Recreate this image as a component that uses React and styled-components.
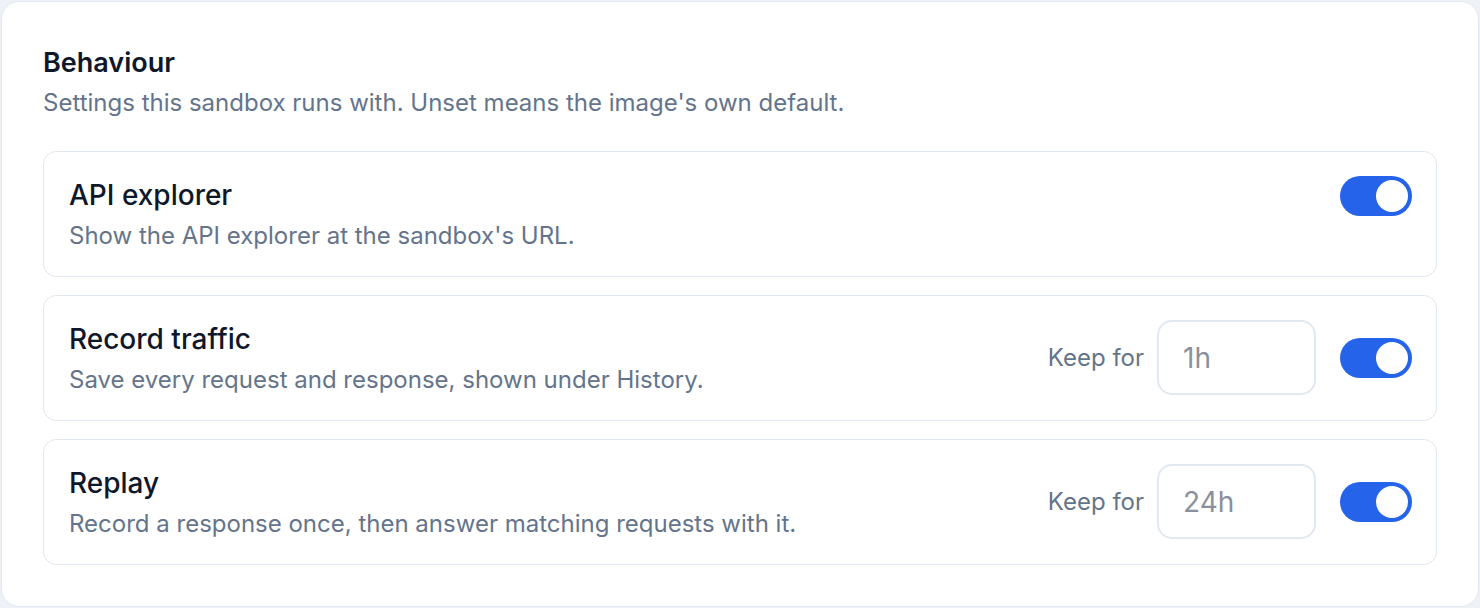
import React, { useState } from "react";
import styled, { createGlobalStyle } from "styled-components";

const Global = createGlobalStyle`
  html, body { margin: 0; padding: 0; background: #eef2f7; }
  body { font-family: Inter, "Noto Sans", sans-serif; -webkit-font-smoothing: antialiased; }
  * { box-sizing: border-box; }
`;

const Page = styled.div`
  padding: 1px;
`;

const Panel = styled.section`
  background: #ffffff;
  border: 1px solid #e2e8f0;
  border-radius: 18px;
  padding: 43px 41px 41px 41px;
  height: 606px;
  display: flex;
  flex-direction: column;
`;

const Header = styled.header`
  display: flex;
  flex-direction: column;
  gap: 6px;
  margin-bottom: 32px;
`;

const Title = styled.h2`
  margin: 0;
  font-size: 27px;
  line-height: 36px;
  font-weight: 600;
  color: #0f172a;
`;

const Subtitle = styled.p`
  margin: 0;
  font-size: 24px;
  line-height: 32px;
  color: #64748b;
`;

const List = styled.div`
  display: flex;
  flex-direction: column;
  gap: 18px;
`;

const Row = styled.div`
  border: 1px solid #e2e8f0;
  border-radius: 13px;
  padding: 24px 24px 24px 25px;
  display: flex;
  align-items: flex-start;
  gap: 24px;
`;

const Info = styled.div`
  flex: 1;
  display: flex;
  flex-direction: column;
  gap: 6px;
`;

const RowTitle = styled.div`
  font-size: 28px;
  line-height: 38px;
  font-weight: 500;
  color: #0f172a;
`;

const RowDesc = styled.div`
  font-size: 24px;
  line-height: 32px;
  color: #64748b;
`;

const Controls = styled.div`
  display: flex;
  align-items: center;
  gap: 24px;
`;

const Keep = styled.label`
  display: flex;
  align-items: center;
  gap: 13px;
  font-size: 24px;
  color: #64748b;
`;

const Input = styled.input`
  width: 159px;
  height: 75px;
  border: 2px solid #e2e8f0;
  border-radius: 15px;
  padding: 0 24px;
  font-family: Inter, "Noto Sans", sans-serif;
  font-size: 28px;
  color: #0f172a;
  outline: none;
  background: #fff;
  &::placeholder { color: #8a909b; }
`;

const Switch = styled.button`
  width: 72px;
  height: 40px;
  border: none;
  border-radius: 20px;
  padding: 0;
  background: ${(p) => (p.$on ? "#2563eb" : "#cbd5e1")};
  position: relative;
  cursor: pointer;
  flex-shrink: 0;
  &::after {
    content: "";
    position: absolute;
    top: 4px;
    left: ${(p) => (p.$on ? "36px" : "4px")};
    width: 32px;
    height: 32px;
    border-radius: 50%;
    background: #fff;
  }
`;

const rows = [
  { title: "API explorer", desc: "Show the API explorer at the sandbox's URL." },
  { title: "Record traffic", desc: "Save every request and response, shown under History.", keep: "1h" },
  { title: "Replay", desc: "Record a response once, then answer matching requests with it.", keep: "24h" },
];

function SettingRow({ title, desc, keep }) {
  const [on, setOn] = useState(true);
  return (
    <Row>
      <Info>
        <RowTitle>{title}</RowTitle>
        <RowDesc>{desc}</RowDesc>
      </Info>
      <Controls>
        {keep && (
          <Keep>
            Keep for
            <Input placeholder={keep} />
          </Keep>
        )}
        <Switch $on={on} onClick={() => setOn(!on)} aria-label={title} />
      </Controls>
    </Row>
  );
}

export default function App() {
  return (
    <Page>
      <Global />
      <Panel>
        <Header>
          <Title>Behaviour</Title>
          <Subtitle>Settings this sandbox runs with. Unset means the image's own default.</Subtitle>
        </Header>
        <List>
          {rows.map((r) => (
            <SettingRow key={r.title} {...r} />
          ))}
        </List>
      </Panel>
    </Page>
  );
}
